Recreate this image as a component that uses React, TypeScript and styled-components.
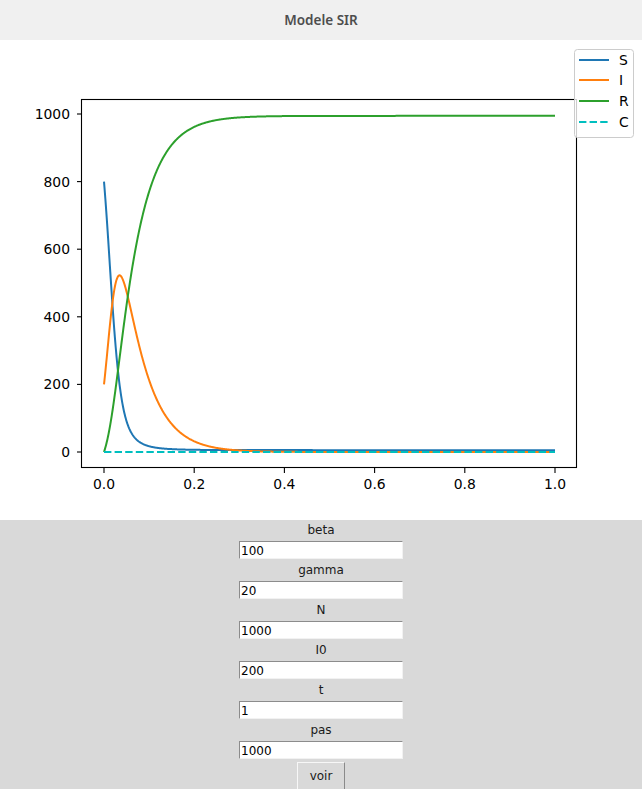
import React, { useMemo } from "react";
import styled, { createGlobalStyle } from "styled-components";

const GlobalStyle = createGlobalStyle`
  html, body { margin: 0; padding: 0; background: #d9d9d9; }
  #root { width: 642px; height: 789px; overflow: hidden; }
`;

const Window = styled.div`
  width: 642px;
  height: 789px;
  display: flex;
  flex-direction: column;
  background: #d9d9d9;
  font-family: "DejaVu Sans", sans-serif;
`;

const TitleBar = styled.div`
  height: 40px;
  flex: 0 0 40px;
  background: #f0f0f0;
  display: flex;
  align-items: center;
  justify-content: center;
  font-family: "Noto Sans", "DejaVu Sans", sans-serif;
  font-weight: 600;
  font-size: 13.5px;
  color: #4d4d4d;
`;

const PlotArea = styled.div`
  height: 480px;
  flex: 0 0 480px;
  background: #ffffff;
`;

const Form = styled.div`
  display: flex;
  flex-direction: column;
  align-items: center;
`;

const Label = styled.div`
  height: 21px;
  line-height: 21px;
  font-size: 12px;
  color: #1a1a1a;
  text-align: center;
`;

const Input = styled.input`
  box-sizing: border-box;
  width: 164px;
  height: 18px;
  margin: 0 0 1px 0;
  padding: 1px 0 0 1px;
  border: 1px solid #f2f2f2;
  border-top-color: #8c8c8c;
  border-left-color: #8c8c8c;
  background: #ffffff;
  font-family: "DejaVu Sans", sans-serif;
  font-size: 12px;
  color: #000;
  outline: none;
`;

const Button = styled.button`
  box-sizing: border-box;
  margin-top: 2px;
  width: 48px;
  height: 28px;
  padding: 0;
  background: #d9d9d9;
  border: 1px solid #8a8a8a;
  border-top-color: #f7f7f7;
  border-left-color: #f7f7f7;
  font-family: "DejaVu Sans", sans-serif;
  font-size: 12px;
  color: #1a1a1a;
`;

const COLORS = { S: "#1f77b4", I: "#ff7f0e", R: "#2ca02c", C: "#00bfbf" };

const px = (t: number) => 104 + 451 * t;
const py = (v: number) => 412 - v * 0.338;

function useSeries() {
  return useMemo(() => {
    const beta = 100, gamma = 20, N = 1000, steps = 1000, T = 1;
    const dt = T / steps;
    const sub = 10;
    const h = dt / sub;
    let y = [N - 200, 200, 0];
    const f = (v: number[]) => {
      const inf = (beta * v[0] * v[1]) / N;
      return [-inf, inf - gamma * v[1], gamma * v[1]];
    };
    const s: string[] = [], i: string[] = [], r: string[] = [];
    for (let k = 0; k <= steps; k++) {
      const t = k * dt;
      const cmd = k === 0 ? "M" : "L";
      s.push(`${cmd}${px(t).toFixed(2)} ${py(y[0]).toFixed(2)}`);
      i.push(`${cmd}${px(t).toFixed(2)} ${py(y[1]).toFixed(2)}`);
      r.push(`${cmd}${px(t).toFixed(2)} ${py(y[2]).toFixed(2)}`);
      for (let j = 0; j < sub; j++) {
        const k1 = f(y);
        const k2 = f(y.map((v, n) => v + (h / 2) * k1[n]));
        const k3 = f(y.map((v, n) => v + (h / 2) * k2[n]));
        const k4 = f(y.map((v, n) => v + h * k3[n]));
        y = y.map((v, n) => v + (h / 6) * (k1[n] + 2 * k2[n] + 2 * k3[n] + k4[n]));
      }
    }
    return { S: s.join(""), I: i.join(""), R: r.join("") };
  }, []);
}

const tickFont = { fontFamily: "DejaVu Sans, sans-serif", fontSize: 13.9 };

function Chart() {
  const paths = useSeries();
  const yTicks = [0, 200, 400, 600, 800, 1000];
  const xTicks = [0, 0.2, 0.4, 0.6, 0.8, 1.0];
  const legend: Array<[keyof typeof COLORS, number]> = [["S", 20], ["I", 40], ["R", 61], ["C", 82]];
  return (
    <svg width={642} height={480} viewBox="0 0 642 480">
      <defs>
        <clipPath id="ax">
          <rect x={81} y={59} width={496} height={369} />
        </clipPath>
      </defs>
      <g clipPath="url(#ax)" fill="none" strokeWidth={2} strokeLinejoin="round">
        <path d={paths.S} stroke={COLORS.S} />
        <path d={paths.I} stroke={COLORS.I} />
        <path d={paths.R} stroke={COLORS.R} />
        <line x1={px(0)} y1={py(0)} x2={px(1)} y2={py(0)} stroke={COLORS.C} strokeDasharray="7.4 3.2" />
      </g>
      <rect x={81.5} y={59.5} width={495} height={368} fill="none" stroke="#000" strokeWidth={1.1} />
      {yTicks.map((v) => (
        <g key={v}>
          <line x1={77} y1={py(v)} x2={81} y2={py(v)} stroke="#000" strokeWidth={1.1} />
          <text x={70} y={py(v)} textAnchor="end" dominantBaseline="central" {...tickFont} fill="#000">
            {v}
          </text>
        </g>
      ))}
      {xTicks.map((v) => (
        <g key={v}>
          <line x1={px(v)} y1={428} x2={px(v)} y2={433} stroke="#000" strokeWidth={1.1} />
          <text x={px(v)} y={444} textAnchor="middle" dominantBaseline="central" {...tickFont} fill="#000">
            {v.toFixed(1)}
          </text>
        </g>
      ))}
      <rect x={574.5} y={9.5} width={59} height={88} rx={3} fill="#fff" fillOpacity={0.8} stroke="#cccccc" strokeWidth={1} />
      {legend.map(([k, y]) => (
        <g key={k}>
          <line
            x1={579}
            y1={y}
            x2={609}
            y2={y}
            stroke={COLORS[k]}
            strokeWidth={2}
            strokeDasharray={k === "C" ? "7.4 3.2" : undefined}
          />
          <text x={619} y={y} dominantBaseline="central" {...tickFont} fill="#000">
            {k}
          </text>
        </g>
      ))}
    </svg>
  );
}

const fields: Array<[string, string]> = [
  ["beta", "100"],
  ["gamma", "20"],
  ["N", "1000"],
  ["I0", "200"],
  ["t", "1"],
  ["pas", "1000"],
];

export default function App() {
  return (
    <>
      <GlobalStyle />
      <Window>
        <TitleBar>Modele SIR</TitleBar>
        <PlotArea>
          <Chart />
        </PlotArea>
        <Form>
          {fields.map(([name, value]) => (
            <React.Fragment key={name}>
              <Label>{name}</Label>
              <Input defaultValue={value} />
            </React.Fragment>
          ))}
          <Button>voir</Button>
        </Form>
      </Window>
    </>
  );
}
